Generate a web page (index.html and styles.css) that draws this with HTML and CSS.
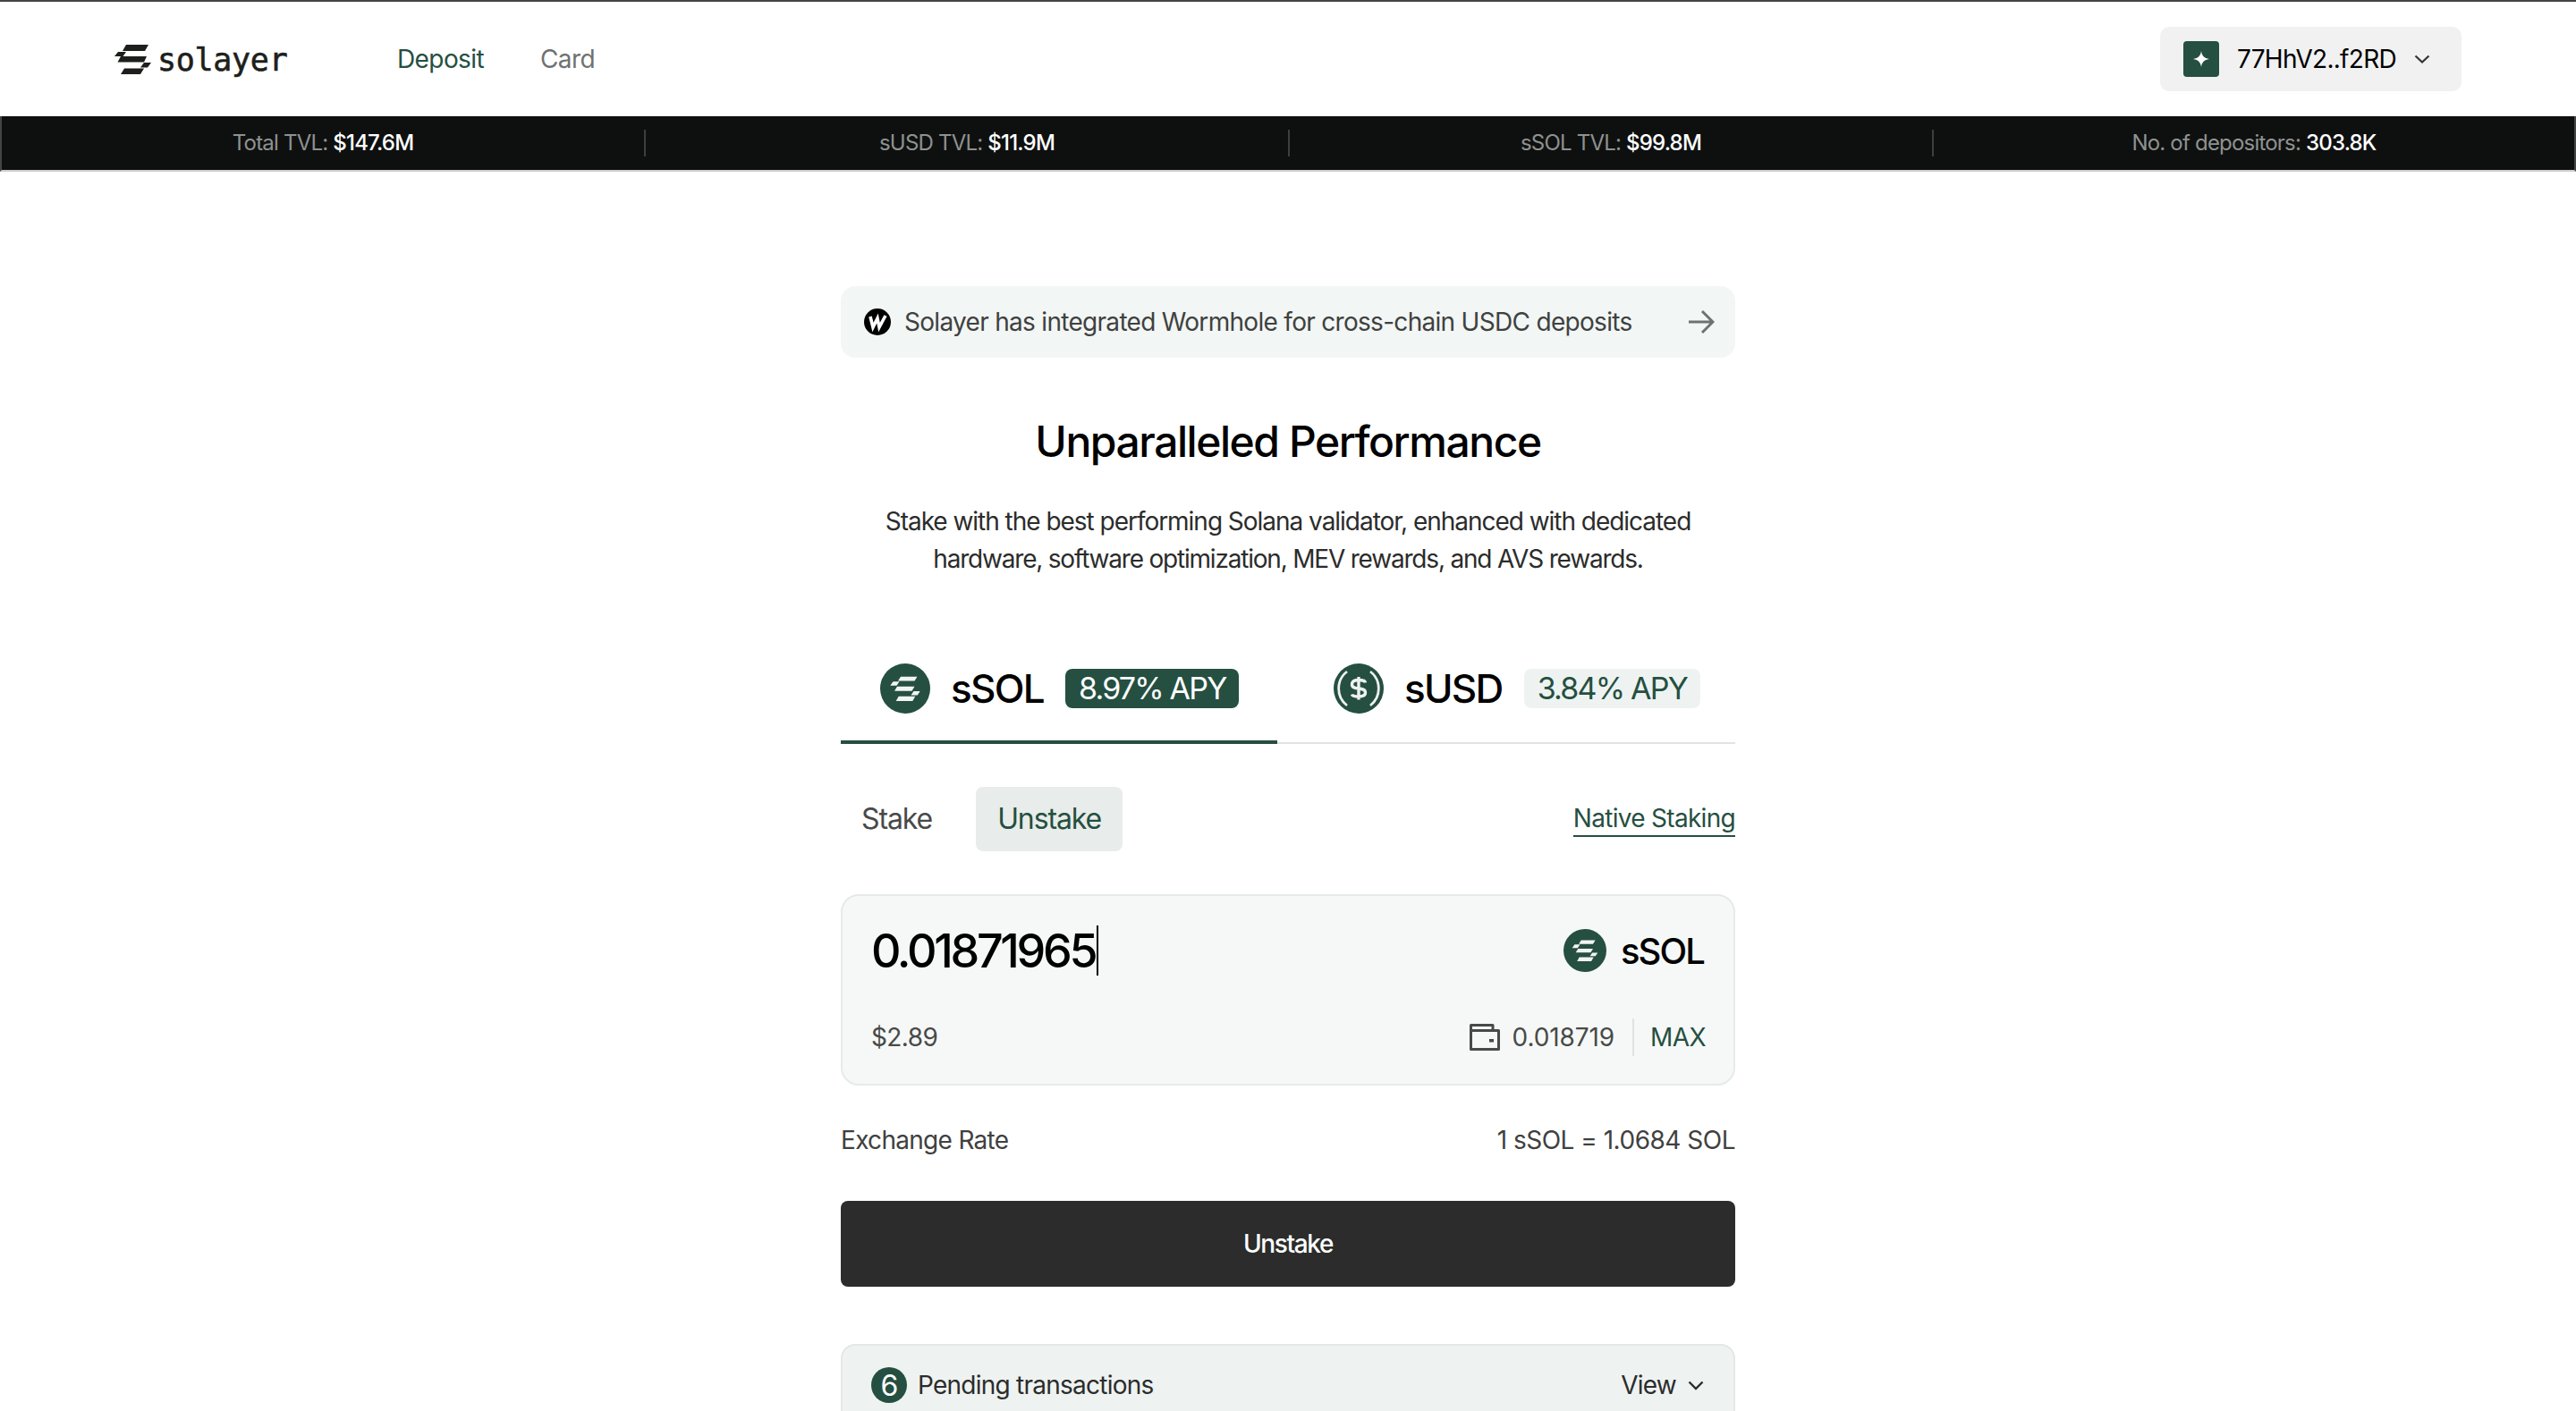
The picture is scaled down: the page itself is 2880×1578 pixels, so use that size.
FILE: index.html
```html
<!DOCTYPE html>
<html lang="en">
<head>
<meta charset="utf-8">
<title>Solayer</title>
<link rel="stylesheet" href="styles.css">
</head>
<body>
<svg class="defs" width="0" height="0" aria-hidden="true">
  <symbol id="mark" viewBox="0 0 41 33">
    <path d="M13 0H38L34 7H9Z M4 8H13L9.500 13H0Z M7 13H36L33 19.500H3.500Z M33 20H41L37 25.500H29Z M11 26.500H33L29 33H7Z" fill="currentColor"/>
  </symbol>
  <symbol id="ssol" viewBox="0 0 56 56">
    <circle cx="28" cy="28" r="28" fill="#254f41"/>
    <path d="M23 14.700H41.500L38.500 19.400H20Z M14.500 20.200H21.500L18.500 24.800H11.300Z M19 25.700H38.500L35.500 30.700H16Z M37.500 31H44.700L41.700 35.400H34.500Z M20.700 36.700H39.300L36.300 42H17.700Z" fill="#f2f4f3"/>
  </symbol>
</svg>

<header class="topbar">
  <div class="topbar-left">
    <a class="logo">
      <svg class="logo-mark"><use href="#mark"/></svg>
      <span class="logo-text">solayer</span>
    </a>
    <nav class="nav">
      <a class="nav-link nav-active">Deposit</a>
      <a class="nav-link">Card</a>
    </nav>
  </div>
  <button class="wallet">
    <span class="wallet-icon">
      <svg width="18" height="18" viewBox="0 0 18 18"><path d="M9 0C9.800 5.600 12.400 8.200 18 9C12.400 9.800 9.800 12.400 9 18C8.200 12.400 5.600 9.800 0 9C5.600 8.200 8.200 5.600 9 0Z" fill="#fff"/></svg>
    </span>
    <span class="wallet-addr">77HhV2..f2RD</span>
    <svg class="wallet-chev" width="18" height="10" viewBox="0 0 18 10"><path d="M1.500 1.500L9 8.500L16.500 1.500" fill="none" stroke="#333" stroke-width="2.200"/></svg>
  </button>
</header>

<section class="stats">
  <div class="stat"><span class="stat-label">Total TVL:</span> <b class="stat-value">$147.6M</b></div>
  <div class="stat"><span class="stat-label">sUSD TVL:</span> <b class="stat-value">$11.9M</b></div>
  <div class="stat"><span class="stat-label">sSOL TVL:</span> <b class="stat-value">$99.8M</b></div>
  <div class="stat"><span class="stat-label">No. of depositors:</span> <b class="stat-value">303.8K</b></div>
</section>

<main class="main">
  <a class="banner">
    <svg class="banner-icon" viewBox="0 0 30 30"><circle cx="15" cy="15" r="15" fill="#000"/><path d="M7 9L10 21L15 11L17 21L24 8" fill="none" stroke="#fff" stroke-width="3.600"/></svg>
    <span class="banner-text">Solayer has integrated Wormhole for cross-chain USDC deposits</span>
    <svg class="banner-arrow" viewBox="0 0 30 28"><path d="M1 14H28M16 2L28 14L16 26" fill="none" stroke="#6f7271" stroke-width="3"/></svg>
  </a>

  <h1 class="title">Unparalleled Performance</h1>
  <p class="lead"><span class="lead-line">Stake with the best performing Solana validator, enhanced with dedicated</span><span class="lead-line lead-line-short">hardware, software optimization, MEV rewards, and AVS rewards.</span></p>

  <div class="tabs">
    <div class="tab tab-active">
      <svg class="token"><use href="#ssol"/></svg>
      <span class="tab-name">sSOL</span>
      <span class="apy apy-on">8.97% APY</span>
    </div>
    <div class="tab tab-rest">
      <svg class="token" viewBox="0 0 56 56">
        <circle cx="28" cy="28" r="28" fill="#254f41"/>
        <path d="M15 9A24 24 0 0 0 15 47M41 9A24 24 0 0 1 41 47" fill="none" stroke="#eef2f0" stroke-width="2.800"/>
        <path d="M35.500 21.500C35 19 32 18.500 28 18.500C23 18.500 20.500 20.500 20.500 23.500C20.500 31 35.500 25 35.500 32.500C35.500 35.500 33 37 28 37C24 37 21 36.500 20.500 34.500M28 15V40.500" fill="none" stroke="#eef2f0" stroke-width="3.400"/>
      </svg>
      <span class="tab-name">sUSD</span>
      <span class="apy apy-off">3.84% APY</span>
    </div>
  </div>

  <div class="modes">
    <div class="mode-group">
      <span class="mode">Stake</span>
      <span class="mode mode-active">Unstake</span>
    </div>
    <a class="native">Native Staking</a>
  </div>

  <div class="amount-card">
    <div class="amount-row">
      <span class="amount"><span>0.01871965</span><i class="caret"></i></span>
      <span class="asset">
        <svg class="asset-icon"><use href="#ssol"/></svg>
        <span>sSOL</span>
      </span>
    </div>
    <div class="balance-row">
      <span class="usd">$2.89</span>
      <span class="balance">
        <svg class="purse" viewBox="0 0 34 30"><path d="M1.500 28.500V1.500H26V7M1.500 7.500H32.500V28.500H1.500Z" fill="none" stroke="#484a49" stroke-width="3" stroke-linejoin="round"/><rect x="22" y="17" width="5" height="3.500" fill="#484a49"/></svg>
        <span class="balance-value">0.018719</span>
        <i class="balance-sep"></i>
        <span class="max">MAX</span>
      </span>
    </div>
  </div>

  <div class="rate">
    <span>Exchange Rate</span>
    <span class="rate-value">1 sSOL = 1.0684 SOL</span>
  </div>

  <button class="submit">Unstake</button>

  <div class="pending">
    <span class="pending-left">
      <span class="pending-count">6</span>
      <span>Pending transactions</span>
    </span>
    <span class="pending-view">
      <span>View</span>
      <svg width="18" height="11" viewBox="0 0 18 11"><path d="M1.500 1.500L9 9L16.500 1.500" fill="none" stroke="#2b2c2b" stroke-width="2.400"/></svg>
    </span>
  </div>
</main>
</body>
</html>
```

FILE: styles.css
```css
* { box-sizing: border-box; margin: 0; padding: 0; }
html, body { height: 1578px; overflow: hidden; background: #fff; }
body { font-family: Inter, "Liberation Sans", sans-serif; color: #000; font-size: 28px; }
.defs { position: absolute; }
a { color: inherit; text-decoration: none; }
button { font: inherit; border: 0; cursor: pointer; }
i { display: block; }

.topbar {
  height: 130px; border-top: 2px solid #444;
  display: flex; align-items: center; justify-content: space-between;
  padding: 0 128px 0 128px;
}
.topbar-left { display: flex; align-items: center; }
.logo { display: flex; align-items: center; width: 316px; color: #1d1f1c; }
.logo-mark { width: 41px; height: 33px; }
.logo-text {
  font-family: "DejaVu Sans Mono", monospace; font-size: 35px; letter-spacing: -0.300px;
  -webkit-text-stroke: 0.6px #1d1f1c;
  margin-left: 7px; line-height: 40px; margin-top: 1px;
}
.nav { display: flex; gap: 63px; font-size: 28px; letter-spacing: -0.600px; }
.nav-link { color: #6f7271; }
.nav-active { color: #254f41; }

.wallet {
  width: 337px; height: 72px; background: #f1f1f1; border-radius: 10px;
  display: flex; align-items: center; padding: 0 26px; color: #000;
}
.wallet-icon {
  width: 40px; height: 40px; background: #254f41; border-radius: 4px; flex: none;
  display: flex; align-items: center; justify-content: center;
}
.wallet-addr { margin-left: 20px; font-size: 28px; letter-spacing: -0.700px; white-space: nowrap; }
.wallet-chev { margin-left: 20px; flex: none; }

.stats {
  height: 62px; background: #0e100f; border-bottom: 2px solid #ccc;
  border-left: 2px solid #444; border-right: 2px solid #444;
  display: grid; grid-template-columns: 718px 720px 720px 718px; align-items: center;
  font-size: 24px; letter-spacing: -0.800px;
}
.stat { height: 30px; line-height: 30px; text-align: center; }
.stat + .stat { border-left: 2px solid #3d3f3e; }
.stat-label { color: #8f9291; }
.stat-value { color: #fff; font-weight: 500; }

.main { width: 1000px; margin: 128px auto 0; }
.banner {
  height: 80px; background: #f2f6f5; border-radius: 16px;
  display: flex; align-items: center; padding: 0 23px 0 26px; color: #3f4140;
}
.banner-icon { width: 30px; height: 30px; flex: none; }
.banner-text { margin-left: 15px; flex: 1; letter-spacing: -0.700px; white-space: nowrap; }
.banner-arrow { width: 30px; height: 28px; flex: none; }

.title { margin-top: 64px; height: 60px; line-height: 60px; font-size: 48px; font-weight: 500; text-align: center; letter-spacing: -1.460px; }
.lead { margin-top: 38px; font-size: 28px; line-height: 42px; text-align: center; color: #2b2c2b; letter-spacing: -1.030px; }
.lead-line { display: block; }
.lead-line-short { letter-spacing: -1.200px; }

.tabs { margin-top: 94px; display: flex; height: 92px; border-bottom: 2px solid #dfe3e2; }
.tab { display: flex; align-items: flex-start; padding-top: 2px; }
.tab-active { width: 488px; height: 92px; border-bottom: 4px solid #254f41; padding-left: 44px; }
.tab-rest { flex: 1; padding-left: 63px; }
.token { width: 56px; height: 56px; flex: none; }
.tab-name { margin-left: 23px; font-size: 44px; line-height: 56px; font-weight: 500; letter-spacing: -1.700px; }
.apy {
  height: 44px; line-height: 44px; margin: 6px 0 0 24px; padding: 0 15px;
  border-radius: 8px; font-size: 34px; letter-spacing: -1.800px; white-space: nowrap;
}
.apy-on { background: #254f41; color: #fff; }
.apy-off { background: #eef3f1; color: #254f41; }

.modes { margin-top: 48px; height: 72px; display: flex; align-items: center; justify-content: space-between; }
.mode-group { display: flex; align-items: center; gap: 26px; }
.mode {
  height: 72px; line-height: 72px; padding: 0 23px; border-radius: 8px;
  font-size: 32px; color: #484a49; letter-spacing: -1.100px;
}
.mode-active { background: #e8ecea; color: #254f41; padding: 0 24px; }
.native { color: #254f41; border-bottom: 2px solid #254f41; line-height: 38px; letter-spacing: -0.700px; }

.amount-card {
  margin-top: 48px; height: 214px; background: #f6f8f7; border: 2px solid #e6eaea; border-radius: 20px;
  padding: 30px 33px 0 32px;
}
.amount-row { height: 62px; display: flex; align-items: center; justify-content: space-between; }
.amount { display: flex; align-items: center; font-size: 52px; font-weight: 500; letter-spacing: -3.300px; }
.caret { width: 2px; height: 56px; background: #000; margin-left: 2px; }
.asset { display: flex; align-items: center; gap: 16px; font-size: 40px; font-weight: 500; letter-spacing: -1.900px; }
.asset-icon { width: 48px; height: 48px; }
.balance-row { margin-top: 45px; display: flex; align-items: center; justify-content: space-between; color: #484a49; letter-spacing: -0.600px; }
.balance { display: flex; align-items: center; }
.purse { width: 34px; height: 30px; }
.balance-value { margin-left: 14px; letter-spacing: -0.100px; }
.balance-sep { width: 2px; height: 42px; background: #dfe3e2; margin: 0 18px 0 20px; }
.max { color: #254f41; margin-right: -2px; }

.rate { margin-top: 43px; height: 36px; line-height: 36px; display: flex; justify-content: space-between; color: #3f4140; letter-spacing: -0.700px; }
.rate-value { letter-spacing: -0.500px; }

.submit {
  display: block; width: 100%; height: 96px; margin-top: 50px; background: #2b2c2b; color: #fff;
  border-radius: 8px; font-weight: 500; letter-spacing: -1.400px;
}

.pending {
  margin-top: 64px; height: 120px; background: #eef2f1; border: 2px solid #e3e7e6; border-radius: 16px;
  padding: 24px 33px 0 32px; display: flex; justify-content: space-between; align-items: flex-start; color: #2b2c2b;
  letter-spacing: -0.750px;
}
.pending-left { display: flex; align-items: center; gap: 12px; }
.pending-count {
  width: 40px; height: 40px; border-radius: 50%; background: #254f41; color: #fff;
  display: flex; align-items: center; justify-content: center; font-size: 32px;
}
.pending-view { display: flex; align-items: center; gap: 13px; height: 40px; }
```
